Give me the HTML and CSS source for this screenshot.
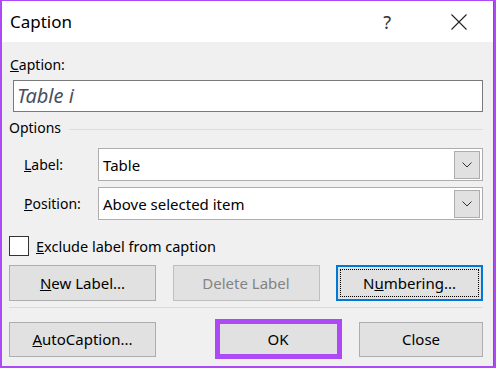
FILE: index.html
```html
<!DOCTYPE html>
<html lang="en">

<head>
    <meta charset="UTF-8" />
    <meta name="viewport" content="width=device-width, initial-scale=1.0" />
    <title>Caption</title>
    <link rel="stylesheet" href="styles.css">
</head>

<body>

    <div class="frame">
        <div class="window">

            <div class="titlebar">
                <span class="title">Caption</span>
                <span class="help">?</span>
                <svg class="close" width="16" height="16" viewBox="0 0 16 16">
                    <path d="M0.5 0.5 L15.5 15.5 M15.5 0.5 L0.5 15.5" stroke="#222" stroke-width="1.1" fill="none" />
                </svg>
            </div>

            <div class="content">
                <div class="field-label"><u>C</u>aption:</div>
                <div class="caption-box">Table i</div>

                <div class="group-head">
                    <span>Options</span>
                    <span class="group-line"></span>
                </div>

                <div class="row">
                    <span class="row-label"><u>L</u>abel:</span>
                    <div class="combo">
                        <span class="combo-text">Table</span>
                        <span class="combo-btn">
                            <svg width="10" height="6" viewBox="0 0 10 6">
                                <path d="M0.5 0.5 L5 5 L9.5 0.5" stroke="#333" stroke-width="1" fill="none" />
                            </svg>
                        </span>
                    </div>
                </div>

                <div class="row">
                    <span class="row-label"><u>P</u>osition:</span>
                    <div class="combo">
                        <span class="combo-text">Above selected item</span>
                        <span class="combo-btn">
                            <svg width="10" height="6" viewBox="0 0 10 6">
                                <path d="M0.5 0.5 L5 5 L9.5 0.5" stroke="#333" stroke-width="1" fill="none" />
                            </svg>
                        </span>
                    </div>
                </div>

                <div class="check-row">
                    <span class="checkbox"></span>
                    <span><u>E</u>xclude label from caption</span>
                </div>

                <div class="btn-row">
                    <button class="btn"><u>N</u>ew Label...</button>
                    <button class="btn disabled">Delete Label</button>
                    <button class="btn focused"><span class="focus-rect">N<u>u</u>mbering...</span></button>
                </div>

                <div class="separator"></div>

                <div class="btn-row bottom">
                    <button class="btn"><u>A</u>utoCaption...</button>
                    <button class="btn ok">OK</button>
                    <button class="btn close-btn">Close</button>
                </div>
            </div>

        </div>
    </div>

</body>

</html>
```

FILE: styles.css
```css
* {
    box-sizing: border-box;
}

body {
    margin: 0;
    font-family: "Noto Sans", "Open Sans", sans-serif;
    font-size: 14px;
    color: #000;
}

.frame {
    width: 496px;
    height: 368px;
    border: 2px solid #ad49f5;
    border-top-width: 1px;
    background: #f0f0f0;
}

.window {
    height: 100%;
    border-right: 1px solid #6a6a6a;
}

.titlebar {
    height: 41px;
    background: #fff;
    display: flex;
    align-items: center;
    padding-left: 8px;
}

.title {
    font-size: 17px;
    flex: 1;
}

.help {
    font-size: 18px;
    color: #333;
    margin-right: 60px;
}

.close {
    margin-right: 26px;
}

.content {
    padding: 0 10px 0 7px;
}

.field-label {
    margin-top: 13px;
    line-height: 20px;
    padding-left: 1px;
}

.caption-box {
    margin: 5px 0 0 4px;
    height: 32px;
    background: #fff;
    border: 1px solid #7a7a7a;
    font-style: italic;
    font-size: 20px;
    color: #4b5060;
    padding-left: 3px;
    line-height: 29px;
}

.group-head {
    display: flex;
    align-items: center;
    margin-top: 6px;
    line-height: 20px;
}

.group-line {
    flex: 1;
    height: 1px;
    background: #dcdcdc;
    margin-left: 8px;
    margin-top: 2px;
}

.row {
    display: flex;
    align-items: center;
    margin-top: 6px;
}

.group-head + .row {
    margin-top: 10px;
}

.row-label {
    width: 89px;
    padding-left: 15px;
}

.combo {
    flex: 1;
    height: 33px;
    background: #fff;
    border: 1px solid #adadad;
    display: flex;
    align-items: center;
    padding: 2px;
}

.combo-text {
    flex: 1;
    padding-left: 2px;
    font-size: 15px;
}

.combo-btn {
    width: 26px;
    height: 28px;
    background: #e1e1e1;
    border: 1px solid #adadad;
    display: flex;
    align-items: center;
    justify-content: center;
}

.check-row {
    display: flex;
    align-items: center;
    margin-top: 16px;
    font-size: 14.5px;
}

.checkbox {
    width: 20px;
    height: 20px;
    background: #fff;
    border: 1px solid #333;
    margin-right: 7px;
}

.btn-row {
    display: flex;
    justify-content: space-between;
    margin-top: 9px;
}

.btn {
    font-family: inherit;
    font-size: 15px;
    color: #000;
    width: 147px;
    height: 36px;
    background: #e1e1e1;
    border: 1px solid #adadad;
    padding: 0;
}

.btn.disabled {
    color: #838383;
    border-color: #bfbfbf;
}

.btn.focused {
    border: 2px solid #0078d7;
    padding: 2px;
}

.focus-rect {
    display: flex;
    align-items: center;
    justify-content: center;
    height: 100%;
    border: 1px dotted #000;
}

.separator {
    height: 1px;
    background: #dadada;
    margin-top: 6px;
}

.bottom {
    margin-top: 11px;
    align-items: center;
}

.bottom .btn {
    height: 35px;
}

.btn.ok {
    width: 127px;
    height: 40px;
    border: 5px solid #ad49f5;
    margin-right: 16px;
    margin-left: 57px;
}

.btn.close-btn {
    width: 124px;
}
```
